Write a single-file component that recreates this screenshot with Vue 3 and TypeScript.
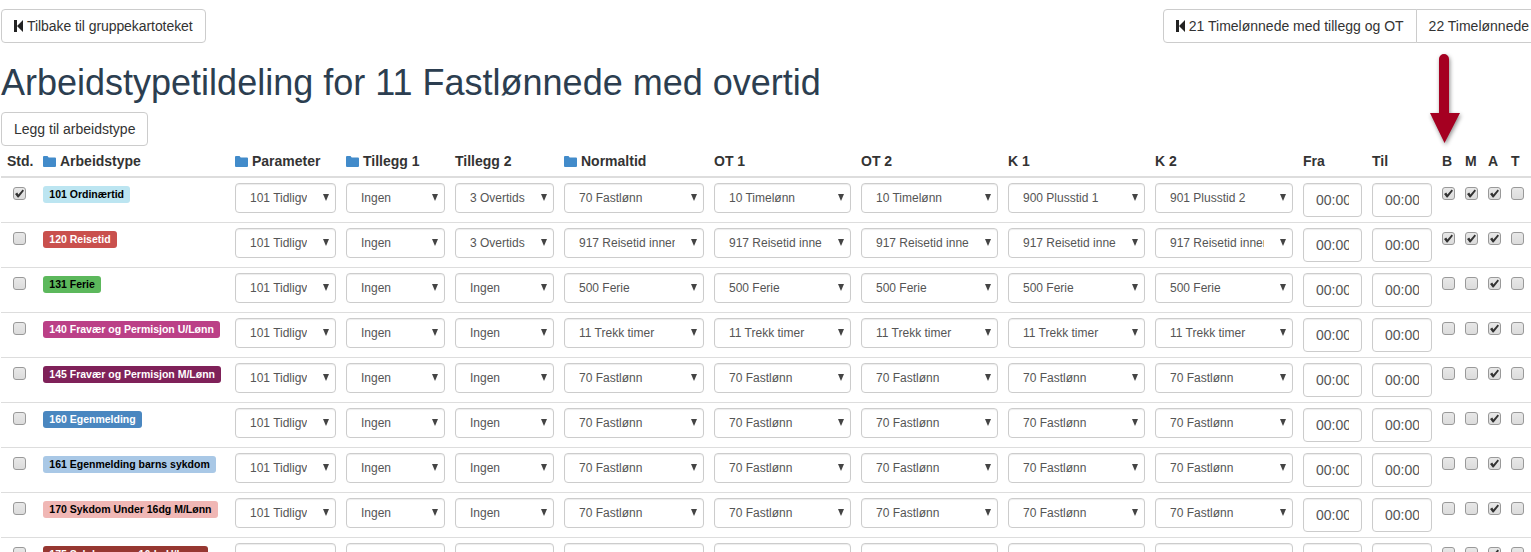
<script setup lang="ts">
interface WorkRow {
  std: boolean
  label: string
  color: string
  dark: boolean
  extra2: string
  normal: string
  codes: string
  days: boolean[]
}

const columns = [
  { title: 'Std.', width: 37, folder: false },
  { title: 'Arbeidstype', width: 192, folder: true },
  { title: 'Parameter', width: 111, folder: true },
  { title: 'Tillegg 1', width: 109, folder: true },
  { title: 'Tillegg 2', width: 109, folder: false },
  { title: 'Normaltid', width: 150, folder: true },
  { title: 'OT 1', width: 147, folder: false },
  { title: 'OT 2', width: 147, folder: false },
  { title: 'K 1', width: 147, folder: false },
  { title: 'K 2', width: 148, folder: false },
  { title: 'Fra', width: 69, folder: false },
  { title: 'Til', width: 70, folder: false },
  { title: 'B', width: 23, folder: false },
  { title: 'M', width: 23, folder: false },
  { title: 'A', width: 23, folder: false },
  { title: 'T', width: 25, folder: false }
]

const onlyA = [false, false, true, false]
const travel = '917 Reisetid innenlands'

const rows: WorkRow[] = [
  { std: true, label: '101 Ordinærtid', color: '#bce5f1', dark: true, extra2: '3 Overtids', normal: '70 Fastlønn', codes: 'first', days: [true, true, true, false] },
  { std: false, label: '120 Reisetid', color: '#c9504d', dark: false, extra2: '3 Overtids', normal: travel, codes: travel, days: [true, true, true, false] },
  { std: false, label: '131 Ferie', color: '#5cb85c', dark: true, extra2: 'Ingen', normal: '500 Ferie', codes: '500 Ferie', days: onlyA },
  { std: false, label: '140 Fravær og Permisjon U/Lønn', color: '#bb4087', dark: false, extra2: 'Ingen', normal: '11 Trekk timer', codes: '11 Trekk timer', days: onlyA },
  { std: false, label: '145 Fravær og Permisjon M/Lønn', color: '#7f2159', dark: false, extra2: 'Ingen', normal: '70 Fastlønn', codes: '70 Fastlønn', days: onlyA },
  { std: false, label: '160 Egenmelding', color: '#4a87c0', dark: false, extra2: 'Ingen', normal: '70 Fastlønn', codes: '70 Fastlønn', days: onlyA },
  { std: false, label: '161 Egenmelding barns sykdom', color: '#a9c8e6', dark: true, extra2: 'Ingen', normal: '70 Fastlønn', codes: '70 Fastlønn', days: onlyA },
  { std: false, label: '170 Sykdom Under 16dg M/Lønn', color: '#f0b7b5', dark: true, extra2: 'Ingen', normal: '70 Fastlønn', codes: '70 Fastlønn', days: onlyA },
  { std: false, label: '175 Sykdom over 16dg U/Lønn', color: '#963731', dark: false, extra2: 'Ingen', normal: '70 Fastlønn', codes: '70 Fastlønn', days: onlyA }
]

function selectsFor(row: WorkRow) {
  const first = row.codes === 'first'
  return [
    '101 Tidligvakt',
    'Ingen',
    row.extra2,
    row.normal,
    first ? '10 Timelønn' : row.codes,
    first ? '10 Timelønn' : row.codes,
    first ? '900 Plusstid 1' : row.codes,
    first ? '901 Plusstid 2' : row.codes
  ]
}
</script>

<template>
  <div class="page">
    <div class="toolbar">
      <button class="btn back" type="button">
        <svg class="step" viewBox="0 0 9 12"><path d="M0 0h3v12H0zM3 6l6-6v12z" /></svg>Tilbake til gruppekartoteket
      </button>
      <div class="btn-group">
        <button class="btn" type="button">
          <svg class="step" viewBox="0 0 9 12"><path d="M0 0h3v12H0zM3 6l6-6v12z" /></svg>21 Timelønnede med tillegg og OT
        </button>
        <button class="btn" type="button">22 Timelønnede</button>
      </div>
    </div>

    <h1>Arbeidstypetildeling for 11 Fastlønnede med overtid</h1>

    <button class="btn" type="button">Legg til arbeidstype</button>

    <table>
      <colgroup>
        <col v-for="col in columns" :key="col.title" :style="{ width: col.width + 'px' }" />
      </colgroup>
      <thead>
        <tr>
          <th v-for="col in columns" :key="col.title">
            <svg v-if="col.folder" class="folder" viewBox="0 0 13 11"><path d="M0 1q0-1 1-1h3.500l1.200 1.500H12q1 0 1 1V10q0 1-1 1H1q-1 0-1-1z" /></svg>{{ col.title }}
          </th>
        </tr>
      </thead>
      <tbody>
        <tr v-for="row in rows" :key="row.label">
          <td class="std"><input class="check" type="checkbox" :checked="row.std" /></td>
          <td>
            <span class="label" :class="{ dark: row.dark }" :style="{ background: row.color }">{{ row.label }}</span>
          </td>
          <td v-for="(val, i) in selectsFor(row)" :key="i">
            <span class="select-wrap">
              <select><option>{{ val }}</option></select>
            </span>
          </td>
          <td><input class="time" type="text" value="00:00" /></td>
          <td><input class="time" type="text" value="00:00" /></td>
          <td v-for="(on, i) in row.days" :key="'d' + i">
            <input class="check" type="checkbox" :checked="on" />
          </td>
        </tr>
      </tbody>
    </table>

    <svg class="arrow" viewBox="0 0 40 100" width="40" height="100">
      <path d="M14 10a5 5 0 0 1 10 0v54h11L19.500 94 5 64h9z" />
    </svg>
  </div>
</template>

<style scoped>
.page {
  position: relative;
  height: 552px;
  padding-left: 1px;
  overflow: hidden;
  box-sizing: border-box;
  font-family: "Liberation Sans", Arial, sans-serif;
  font-size: 14px;
  color: #333;
}

.toolbar {
  display: flex;
  justify-content: space-between;
  padding-top: 9px;
}

.btn {
  height: 34px;
  padding: 6px 12px;
  border: 1px solid #ccc;
  border-radius: 4px;
  background: #fff;
  color: #333;
  font: inherit;
  line-height: 20px;
  white-space: nowrap;
}

.back {
  letter-spacing: -0.07px;
}

.btn-group {
  display: flex;
  margin-right: -11px;
  flex-shrink: 0;
}

.btn-group .btn:first-child {
  border-radius: 4px 0 0 4px;
}

.btn-group .btn:last-child {
  margin-left: -1px;
  border-radius: 0 4px 4px 0;
}

.step {
  width: 9px;
  height: 12px;
  margin-right: 4px;
  vertical-align: -1px;
  fill: #222;
}

h1 {
  margin: 20px 0 9px;
  font-size: 36px;
  font-weight: 500;
  line-height: 40px;
  color: #2c3e50;
}

table {
  width: 1530px;
  table-layout: fixed;
  border-collapse: separate;
  border-spacing: 0;
}

th {
  height: 20px;
  padding: 5px;
  border-bottom: 2px solid #ddd;
  text-align: left;
  font-weight: 700;
  line-height: 20px;
  white-space: nowrap;
}

th:first-child {
  padding-left: 6px;
}

.folder {
  width: 13px;
  height: 11px;
  margin-right: 4px;
  vertical-align: -1px;
  fill: #428bca;
}

td {
  padding: 5px;
  border-bottom: 1px solid #ddd;
  vertical-align: top;
  line-height: 0;
}

.std {
  padding-left: 12px;
}

.check {
  position: relative;
  display: block;
  width: 13px;
  height: 13px;
  margin: 4px 0 0;
  box-sizing: border-box;
  appearance: none;
  border: 1px solid #999;
  border-radius: 3px;
  background: linear-gradient(#e8e8e8, #dcdcdc);
}

.check:checked::after {
  content: "";
  position: absolute;
  left: 1px;
  top: 1px;
  width: 9px;
  height: 9px;
  background: #333;
  clip-path: polygon(0 55%, 25% 40%, 38% 60%, 85% 5%, 100% 20%, 40% 95%, 30% 95%);
}

.label {
  display: inline-block;
  margin-top: 3px;
  padding: 3px 6.300px;
  border-radius: 3px;
  color: #fff;
  font-size: 10.500px;
  font-weight: 700;
  line-height: 11px;
  white-space: nowrap;
}

.label.dark {
  color: #000;
}

.select-wrap {
  position: relative;
  display: block;
}

.select-wrap::after {
  content: "";
  position: absolute;
  right: 7px;
  top: 11px;
  border-left: 3px solid transparent;
  border-right: 3px solid transparent;
  border-top: 7px solid #444;
  pointer-events: none;
}

select {
  display: block;
  width: 100%;
  height: 30px;
  padding: 0 28px 0 14px;
  box-sizing: border-box;
  appearance: none;
  border: 1px solid #ccc;
  border-radius: 4px;
  background: #fff;
  box-shadow: inset 0 1px 1px rgba(0, 0, 0, 0.075);
  color: #555;
  font: 12px "Liberation Sans", Arial, sans-serif;
}

.time {
  display: block;
  width: 100%;
  height: 34px;
  padding: 6px 12px;
  box-sizing: border-box;
  border: 1px solid #ccc;
  border-radius: 4px;
  box-shadow: inset 0 1px 1px rgba(0, 0, 0, 0.075);
  color: #555;
  font: 14px "Liberation Sans", Arial, sans-serif;
}

.arrow {
  position: absolute;
  left: 1425px;
  top: 49px;
  fill: #a50021;
  filter: drop-shadow(1px 2px 2px rgba(0, 0, 0, 0.45));
}
</style>

<style>
body {
  overflow: hidden;
}
</style>
